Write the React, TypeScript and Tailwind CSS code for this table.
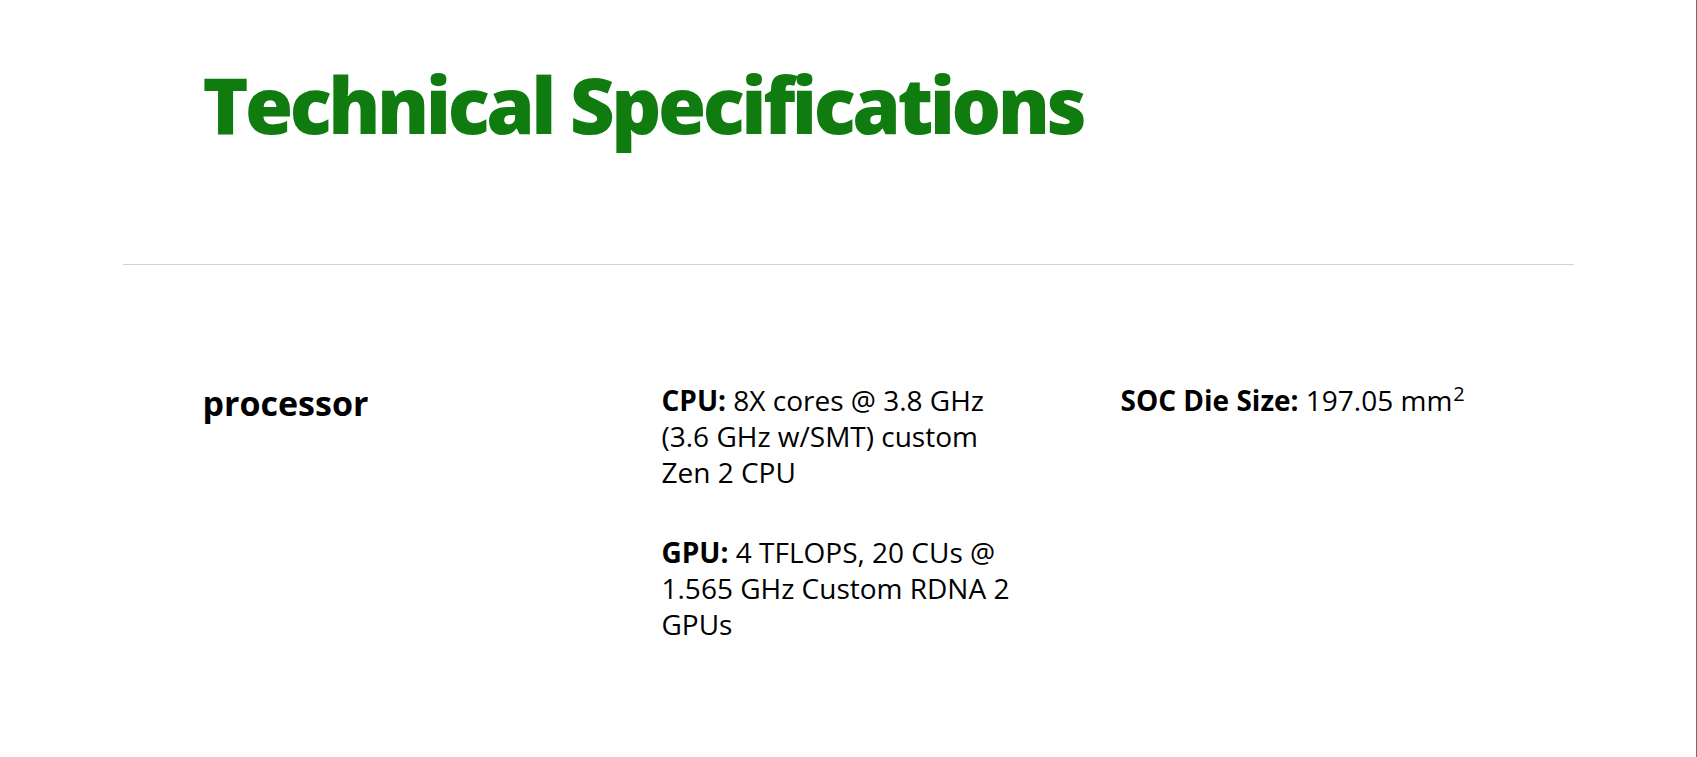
export default function App() {
  return (
    <div className="min-h-screen bg-white border-r border-[#6e6e6e] font-['Open_Sans','Noto_Sans',sans-serif] text-black">
      <section className="mx-auto w-[1451px]">
        {/* Title */}
        <h1 className="pl-[80px] pt-[56px] text-[78px] font-extrabold leading-[96px] tracking-[-3.5px] text-[#107c10]">
          Technical Specifications
        </h1>

        <hr className="mt-[112px] border-0 border-t border-[#d2d2d2]" />

        {/* Spec rows */}
        <div className="grid grid-cols-[459px_459px_1fr] pl-[80px] pt-[117px] pb-[100px]">
          <h2 className="text-[34px] font-bold leading-[42px]">processor</h2>

          <div className="w-[364px] text-[28px] leading-[36px]">
            <p>
              <span className="font-bold">CPU:</span> 8X cores @ 3.8 GHz (3.6 GHz w/SMT) custom Zen 2 CPU
            </p>
            <p className="mt-[44px]">
              <span className="font-bold">GPU:</span> 4 TFLOPS, 20 CUs @ 1.565 GHz Custom RDNA 2 GPUs
            </p>
          </div>

          <div className="text-[28px] leading-[36px]">
            <p>
              <span className="font-bold">SOC Die Size:</span> 197.05 mm
              <sup className="-top-[10px] ml-[1px] text-[20px]">2</sup>
            </p>
          </div>
        </div>
      </section>
    </div>
  );
}
